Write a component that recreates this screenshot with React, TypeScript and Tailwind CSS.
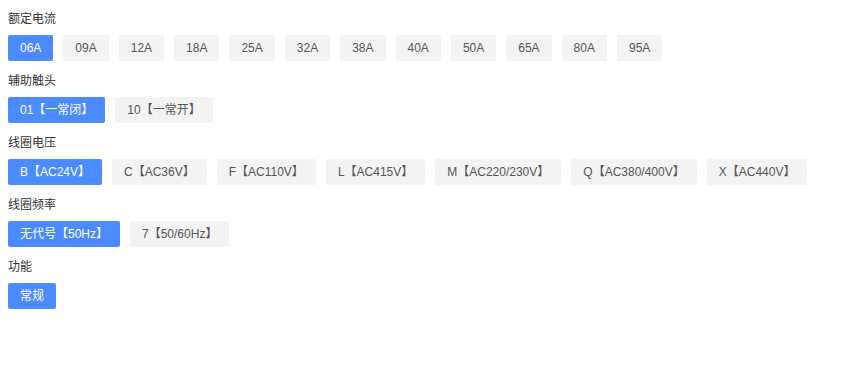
import React, { useState } from 'react';

interface Group {
  id: string;
  label: string;
  options: string[];
}

const groups: Group[] = [
  {
    id: 'current',
    label: '额定电流',
    options: ['06A', '09A', '12A', '18A', '25A', '32A', '38A', '40A', '50A', '65A', '80A', '95A']
  },
  { id: 'aux', label: '辅助触头', options: ['01【一常闭】', '10【一常开】'] },
  {
    id: 'voltage',
    label: '线圈电压',
    options: ['B【AC24V】', 'C【AC36V】', 'F【AC110V】', 'L【AC415V】', 'M【AC220/230V】', 'Q【AC380/400V】', 'X【AC440V】']
  },
  { id: 'freq', label: '线圈频率', options: ['无代号【50Hz】', '7【50/60Hz】'] },
  { id: 'func', label: '功能', options: ['常规'] }
];

export default function App() {
  const [selected, setSelected] = useState<Record<string, number>>({
    current: 0,
    aux: 0,
    voltage: 0,
    freq: 0,
    func: 0
  });

  return (
    <div
      className="w-full min-h-[372px] bg-white px-2 pt-[9px] text-xs"
      style={{ fontFamily: '"Liberation Sans", Arial, "Noto Sans CJK SC", sans-serif' }}
    >
      {groups.map(group => (
        <div key={group.id} className="mb-[10px]">
          <div className="h-5 leading-5 text-[#333]">{group.label}</div>
          <div className="mt-[6px] flex flex-wrap gap-[10px]">
            {group.options.map((opt, i) => {
              const active = selected[group.id] === i;
              return (
                <button
                  key={opt}
                  onClick={() => setSelected({ ...selected, [group.id]: i })}
                  className={`h-[26px] rounded-[2px] px-3 text-xs leading-[26px] whitespace-nowrap ${
                    active ? 'bg-[#4b8bff] text-white' : 'bg-[#f3f3f3] text-[#555]'
                  }`}
                >
                  {opt}
                </button>
              );
            })}
          </div>
        </div>
      ))}
    </div>
  );
}
